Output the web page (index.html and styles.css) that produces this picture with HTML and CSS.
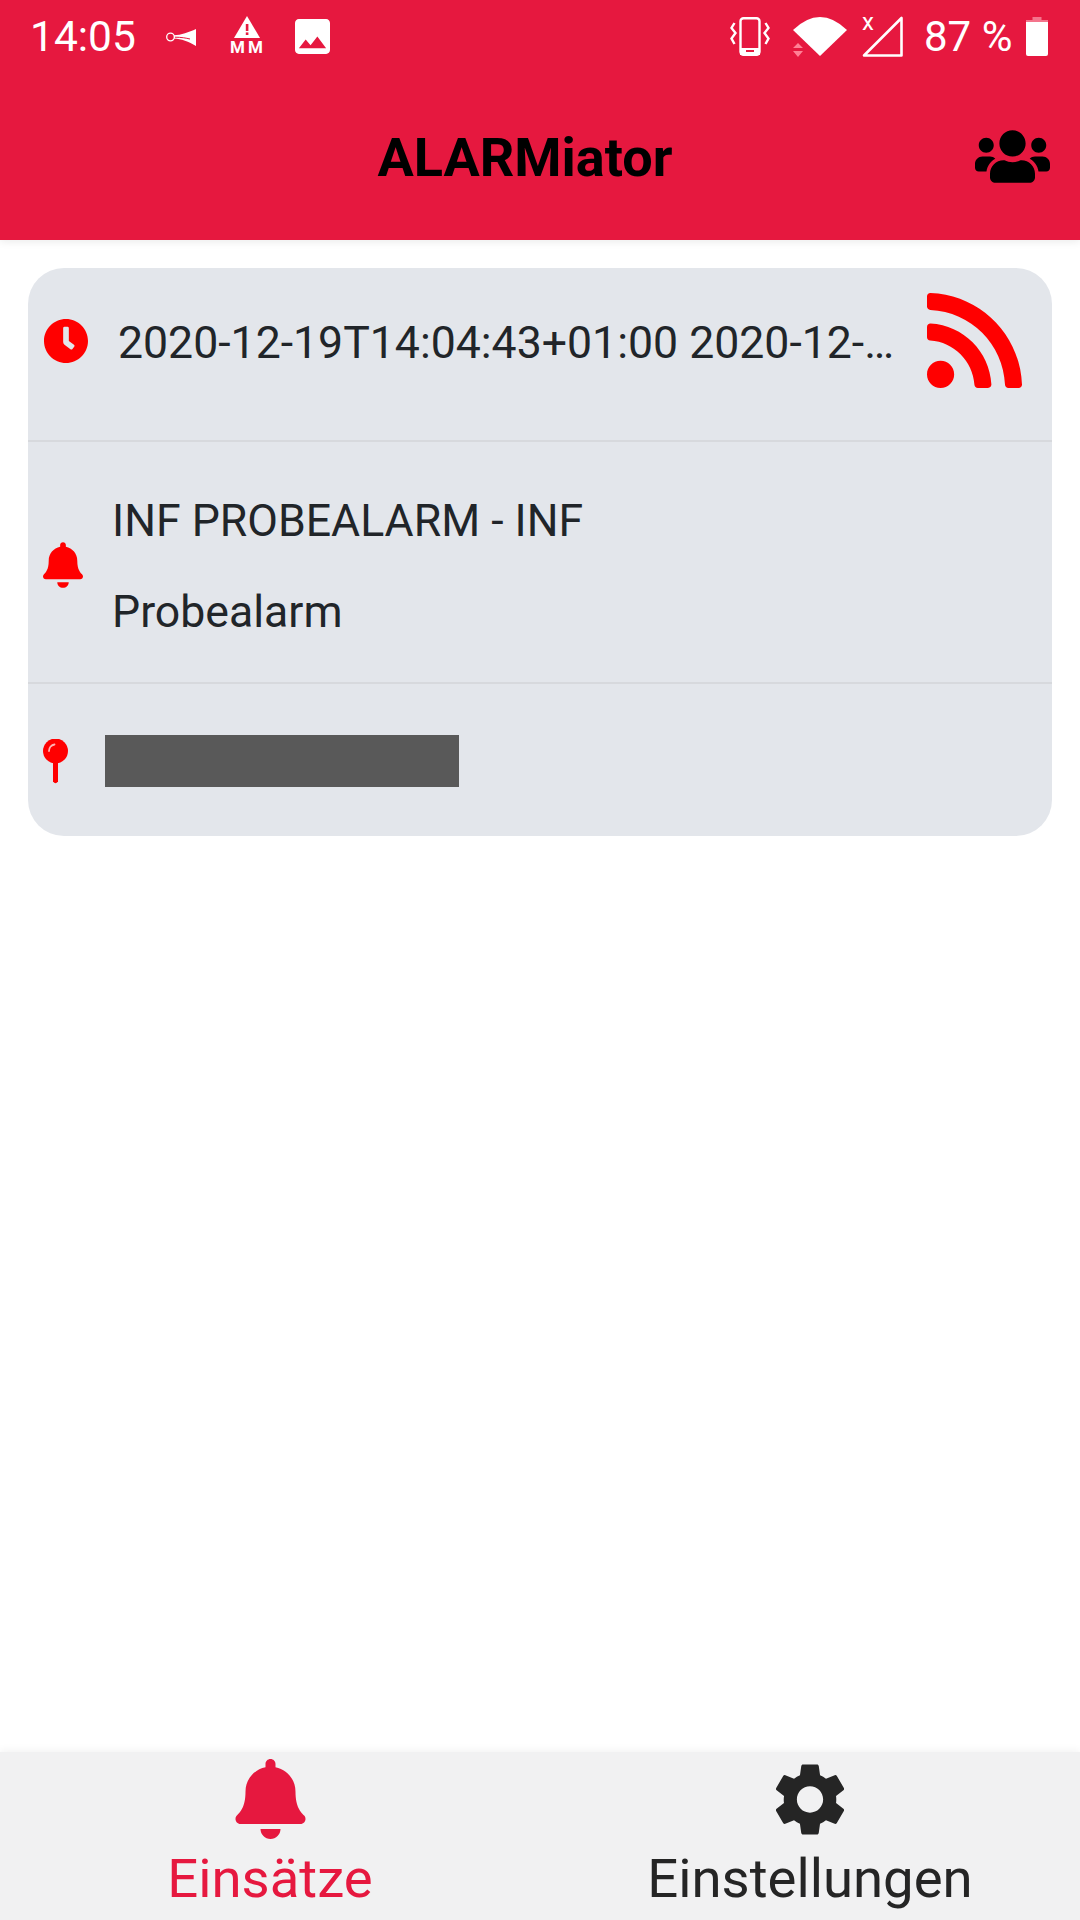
FILE: index.html
```html
<!DOCTYPE html>
<html lang="de">
  <head>
    <meta charset="UTF-8" />
    <meta name="viewport" content="width=device-width, initial-scale=1.0" />
    <title>ALARMiator</title>
    <link rel="stylesheet" href="styles.css">
  </head>
  <body>
    <header class="header">
      <div class="status-bar">
        <span class="clock">14:05</span>
        <svg class="icon-horn" viewBox="0 0 30 18">
          <circle cx="4.500" cy="9" r="3.800" fill="none" stroke="#fff" stroke-width="1.300"/>
          <path d="M8 7.200 C15 7.200 23 4 30 1 V18 C23 14 15 10.800 8 10.600 Z" fill="#fff"/>
          <path d="M9 9.200 C15 9.200 20 10 24 11" fill="none" stroke="#e6183f" stroke-width="1"/>
        </svg>
        <div class="alert-mm">
          <svg class="icon-alert" viewBox="0 0 26 22">
            <path d="M13 0 L26 22 H0 Z" fill="#fff"/>
            <rect x="11.800" y="8" width="2.600" height="7" fill="#e6183f"/>
            <rect x="11.800" y="16.400" width="2.600" height="2.600" fill="#e6183f"/>
          </svg>
          <span class="mm">MM</span>
        </div>
        <svg class="icon-image" viewBox="3 3 18 18">
          <path fill="#fff" d="M21 19V5c0-1.100-.9-2-2-2H5c-1.100 0-2 .9-2 2v14c0 1.100.9 2 2 2h14c1.100 0 2-.9 2-2zM8.500 13.500l2.500 3.010L14.500 12l4.500 6H5l3.500-4.500z"/>
        </svg>
        <div class="status-right">
          <svg class="icon-vibrate" viewBox="0 0 40 39">
            <rect x="10.500" y="1.200" width="19" height="36.600" rx="3" fill="none" stroke="#fff" stroke-width="2.400"/>
            <rect x="10" y="31" width="20" height="7" fill="#fff"/>
            <rect x="16" y="33" width="8" height="2" fill="#e6183f"/>
            <path d="M4.500 6 L1.500 11 L5.500 16 L1.500 21.500 L4.500 27" fill="none" stroke="#fff" stroke-width="2.400"/>
            <path d="M35.500 6 L38.500 11 L34.500 16 L38.500 21.500 L35.500 27" fill="none" stroke="#fff" stroke-width="2.400"/>
          </svg>
          <svg class="icon-wifi" viewBox="0 0 54 41">
            <path d="M0 13 Q27 -13 54 13 L27 39 Z" fill="#fff"/>
            <path d="M5 26 L10 31 H0 Z M0 34 H10 L5 40 Z" fill="#ff8095"/>
          </svg>
          <div class="signal">
            <span class="signal-x">x</span>
            <svg class="icon-signal" viewBox="0 0 41 41">
              <path d="M39.500 2 V39.500 H2 Z" fill="none" stroke="#fff" stroke-width="2.600" stroke-linejoin="round"/>
            </svg>
          </div>
          <span class="battery-text">87 %</span>
          <svg class="icon-battery" viewBox="0 0 22 39">
            <path d="M6.500 0 H15.500 V3 H22 V9 H0 V3 H6.500 Z" fill="#f4748c"/>
            <path d="M0 5 H22 V37 Q22 39 20 39 H2 Q0 39 0 37 Z" fill="#fff"/>
          </svg>
        </div>
      </div>
      <div class="toolbar">
        <h1 class="title">ALARMiator</h1>
        <svg class="icon-users" viewBox="0 32 640 448">
          <path d="M96 224c35.300 0 64-28.700 64-64s-28.700-64-64-64-64 28.700-64 64 28.700 64 64 64zm448 0c35.300 0 64-28.700 64-64s-28.700-64-64-64-64 28.700-64 64 28.700 64 64 64zm32 32h-64c-17.600 0-33.500 7.100-45.100 18.600 40.300 22.100 68.900 62 75.100 109.400h66c17.700 0 32-14.300 32-32v-32c0-35.300-28.700-64-64-64zm-256 0c61.900 0 112-50.100 112-112S381.900 32 320 32 208 82.100 208 144s50.100 112 112 112zm76.800 32h-8.300c-20.800 10-43.900 16-68.500 16s-47.600-6-68.500-16h-8.300C179.600 288 128 339.600 128 403.200V432c0 26.500 21.500 48 48 48h288c26.500 0 48-21.500 48-48v-28.800c0-63.600-51.600-115.200-115.200-115.200zm-223.700-13.400C161.500 263.100 145.600 256 128 256H64c-35.300 0-64 28.700-64 64v32c0 17.700 14.300 32 32 32h65.900c6.300-47.400 34.900-87.300 75.200-109.400z"/>
        </svg>
      </div>
    </header>

    <main class="content">
      <section class="card">
        <div class="row row-time">
          <svg class="icon-clock" viewBox="8 8 496 496">
            <path fill="#f00" d="M256,8C119,8,8,119,8,256S119,504,256,504,504,393,504,256,393,8,256,8Zm92.490,313h0l-20,25a16,16,0,0,1-22.490,2.500h0l-67-49.720a40,40,0,0,1-15-31.230V112a16,16,0,0,1,16-16h32a16,16,0,0,1,16,16V256l58,42.500A16,16,0,0,1,348.490,321Z"/>
          </svg>
          <div class="time-text">2020-12-19T14:04:43+01:00 2020-12-…</div>
          <svg class="icon-rss" viewBox="0 32 448 448">
            <path fill="#f00" d="M128.081 415.959c0 35.369-28.672 64.041-64.041 64.041S0 451.328 0 415.959s28.672-64.041 64.041-64.041 64.040 28.673 64.040 64.041zm175.660 47.250c-8.354-154.600-132.185-278.587-286.950-286.950C7.656 175.765 0 183.105 0 192.253v48.069c0 8.415 6.490 15.472 14.887 16.018 111.832 7.284 201.473 96.702 208.772 208.772.547 8.397 7.604 14.887 16.018 14.887h48.069c9.149.001 16.489-7.655 15.995-16.790zm144.249.288C439.596 229.677 251.465 40.445 16.503 32.010 7.473 31.686 0 38.981 0 48.016v48.068c0 8.625 6.835 15.645 15.453 15.999 191.179 7.839 344.627 161.316 352.465 352.465.353 8.618 7.373 15.453 15.999 15.453h48.068c9.034-.001 16.329-7.474 16.005-16.504z"/>
          </svg>
        </div>
        <div class="row row-alarm">
          <svg class="icon-bell-small" viewBox="0 0 448 512">
            <path fill="#f00" d="M224 512c35.320 0 63.970-28.650 63.970-64H160.030c0 35.350 28.650 64 63.970 64zm215.390-149.710c-19.320-20.760-55.470-51.990-55.470-154.290 0-77.700-54.480-139.900-127.940-155.160V32c0-17.670-14.320-32-31.980-32s-31.980 14.330-31.980 32v20.840C118.560 68.100 64.080 130.300 64.080 208c0 102.300-36.150 133.530-55.470 154.290-6 6.450-8.660 14.160-8.610 21.710.11 16.400 12.980 32 32.100 32h383.800c19.120 0 32-15.600 32.100-32 .05-7.550-2.610-15.270-8.610-21.710z"/>
          </svg>
          <div class="alarm-text">
            <p>INF PROBEALARM - INF</p>
            <p>Probealarm</p>
          </div>
        </div>
        <div class="row row-place">
          <svg class="icon-pin" viewBox="0 0 25 45">
            <circle cx="12.500" cy="12" r="12.500" fill="#f00"/>
            <path d="M6 12 C6 8.500 8.500 6 11.500 5.500" fill="none" stroke="#ffb3b3" stroke-width="1.800" stroke-linecap="round"/>
            <path d="M10 24 H15 V42.500 Q12.500 46 10 42.500 Z" fill="#f00"/>
          </svg>
          <div class="redacted"></div>
        </div>
      </section>
    </main>

    <nav class="tabbar">
      <div class="tab tab-active">
        <div class="tab-icon">
          <svg class="icon-bell" viewBox="0 0 448 512">
            <path fill="#e6183f" d="M224 512c35.320 0 63.970-28.650 63.970-64H160.030c0 35.350 28.650 64 63.970 64zm215.390-149.710c-19.320-20.760-55.470-51.990-55.470-154.290 0-77.700-54.480-139.900-127.940-155.160V32c0-17.670-14.320-32-31.980-32s-31.980 14.330-31.980 32v20.840C118.560 68.100 64.080 130.300 64.080 208c0 102.300-36.150 133.530-55.470 154.290-6 6.450-8.660 14.160-8.610 21.710.11 16.400 12.980 32 32.100 32h383.800c19.120 0 32-15.600 32.100-32 .05-7.550-2.610-15.270-8.610-21.710z"/>
          </svg>
        </div>
        <span class="tab-label">Einsätze</span>
      </div>
      <div class="tab">
        <div class="tab-icon">
          <svg class="icon-gear" viewBox="2.600 2 18.800 20">
            <path fill="#252525" d="M19.140 12.940c.04-.3.06-.61.06-.94 0-.32-.02-.64-.07-.94l2.030-1.580c.18-.14.23-.41.12-.61l-1.920-3.320c-.12-.22-.37-.29-.59-.22l-2.390.96c-.5-.38-1.030-.7-1.620-.94l-.36-2.540c-.04-.24-.24-.41-.48-.41h-3.840c-.24 0-.43.17-.47.41l-.36 2.540c-.59.24-1.130.57-1.620.94l-2.390-.96c-.22-.08-.47 0-.59.22L2.740 8.870c-.12.21-.08.47.12.61l2.030 1.580c-.05.3-.09.63-.09.94s.02.64.07.94l-2.030 1.580c-.18.14-.23.41-.12.61l1.920 3.320c.12.22.37.29.59.22l2.390-.96c.5.38 1.030.7 1.620.94l.36 2.540c.05.24.24.41.48.41h3.840c.24 0 .44-.17.47-.41l.36-2.540c.59-.24 1.130-.56 1.620-.94l2.390.96c.22.08.47 0 .59-.22l1.920-3.320c.12-.22.07-.47-.12-.61l-2.010-1.580zM12 15.600c-1.980 0-3.600-1.620-3.600-3.600s1.620-3.600 3.600-3.600 3.600 1.620 3.600 3.600-1.620 3.600-3.600 3.600z"/>
          </svg>
        </div>
        <span class="tab-label">Einstellungen</span>
      </div>
    </nav>
  </body>
</html>
```

FILE: styles.css
```css
* {
  box-sizing: border-box;
}

body {
  margin: 0;
  width: 1080px;
  height: 1920px;
  display: flex;
  flex-direction: column;
  font-family: Roboto, "Liberation Sans", sans-serif;
  background-color: #fff;
  color: #212529;
  overflow: hidden;
}

svg {
  display: block;
  flex-shrink: 0;
}

/* header */
.header {
  height: 240px;
  background-color: #e6183f;
  box-shadow: 0 2px 8px rgba(0, 0, 0, 0.08);
  z-index: 1;
}

.status-bar {
  height: 72px;
  display: flex;
  align-items: center;
  padding: 0 32px 0 30px;
  color: #fff;
}

.clock {
  font-size: 42.5px;
  width: 136px;
  margin-top: 1px;
}

.icon-horn {
  width: 30px;
  height: 18px;
  margin-right: 34px;
  margin-top: 2px;
}

.alert-mm {
  width: 33px;
  height: 40px;
  margin-right: 32px;
  display: flex;
  flex-direction: column;
  align-items: center;
}

.icon-alert {
  width: 26px;
  height: 22px;
}

.mm {
  font-size: 17px;
  font-weight: 700;
  line-height: 18px;
  letter-spacing: 3px;
  margin-right: -3px;
}

.icon-image {
  width: 35px;
  height: 35px;
}

.status-right {
  margin-left: auto;
  display: flex;
  align-items: center;
}

.icon-vibrate {
  width: 40px;
  height: 39px;
  margin-right: 23px;
}

.icon-wifi {
  width: 54px;
  height: 41px;
  margin-right: 15px;
  margin-top: 2px;
}

.signal {
  width: 41px;
  height: 41px;
  margin-right: 21px;
  position: relative;
}

.signal-x {
  position: absolute;
  left: 0;
  top: -8px;
  font-size: 24px;
}

.icon-signal {
  width: 41px;
  height: 41px;
}

.battery-text {
  font-size: 42px;
  width: 102px;
  margin-top: 1px;
}

.icon-battery {
  width: 22px;
  height: 39px;
}

.toolbar {
  height: 168px;
  display: flex;
  align-items: center;
  padding: 0 30px 0 75px;
}

.title {
  flex: 1;
  margin: 2px 0 0;
  font-size: 54px;
  font-weight: 700;
  text-align: center;
  color: #000;
}

.icon-users {
  width: 75px;
  height: 53px;
}

/* card */
.content {
  flex: 1;
  padding: 28px;
}

.card {
  background-color: #e3e6eb;
  border-radius: 36px;
  overflow: hidden;
  font-size: 44.6px;
}

.row {
  display: flex;
  align-items: center;
  padding-left: 15px;
  border-bottom: 2px solid #d7d9dd;
}

.row:last-child {
  border-bottom: none;
}

.row-time {
  height: 174px;
  padding: 26px 30px 53px 16px;
}

.icon-clock {
  width: 44px;
  height: 44px;
  margin-right: 30px;
}

.time-text {
  flex: 1;
  min-width: 0;
  white-space: nowrap;
  margin-top: 4px;
}

.icon-rss {
  width: 95px;
  height: 95px;
}

.row-alarm {
  height: 242px;
}

.icon-bell-small {
  width: 40px;
  height: 46px;
  margin-right: 29px;
  margin-top: 6px;
}

.alarm-text {
  margin-top: 9px;
}

.alarm-text p {
  margin: 0;
  line-height: 49px;
}

.alarm-text p + p {
  margin-top: 42px;
}

.row-place {
  height: 152px;
  padding-top: 2px;
}

.icon-pin {
  width: 25px;
  height: 45px;
  margin-right: 37px;
}

.redacted {
  width: 354px;
  height: 52px;
  background-color: #595959;
}

/* bottom tabs */
.tabbar {
  height: 168px;
  display: flex;
  background-color: #f1f1f2;
  box-shadow: 0 -2px 8px rgba(0, 0, 0, 0.05);
}

.tab {
  flex: 1;
  display: flex;
  flex-direction: column;
  align-items: center;
  padding-top: 7px;
  color: #252525;
}

.tab-active {
  color: #e6183f;
}

.tab-icon {
  height: 80px;
  display: flex;
  align-items: center;
}

.icon-bell {
  width: 71px;
  height: 80px;
}

.icon-gear {
  width: 72px;
  height: 73px;
}

.tab-label {
  font-size: 54.5px;
  line-height: 60px;
  margin-top: 9px;
}
```
